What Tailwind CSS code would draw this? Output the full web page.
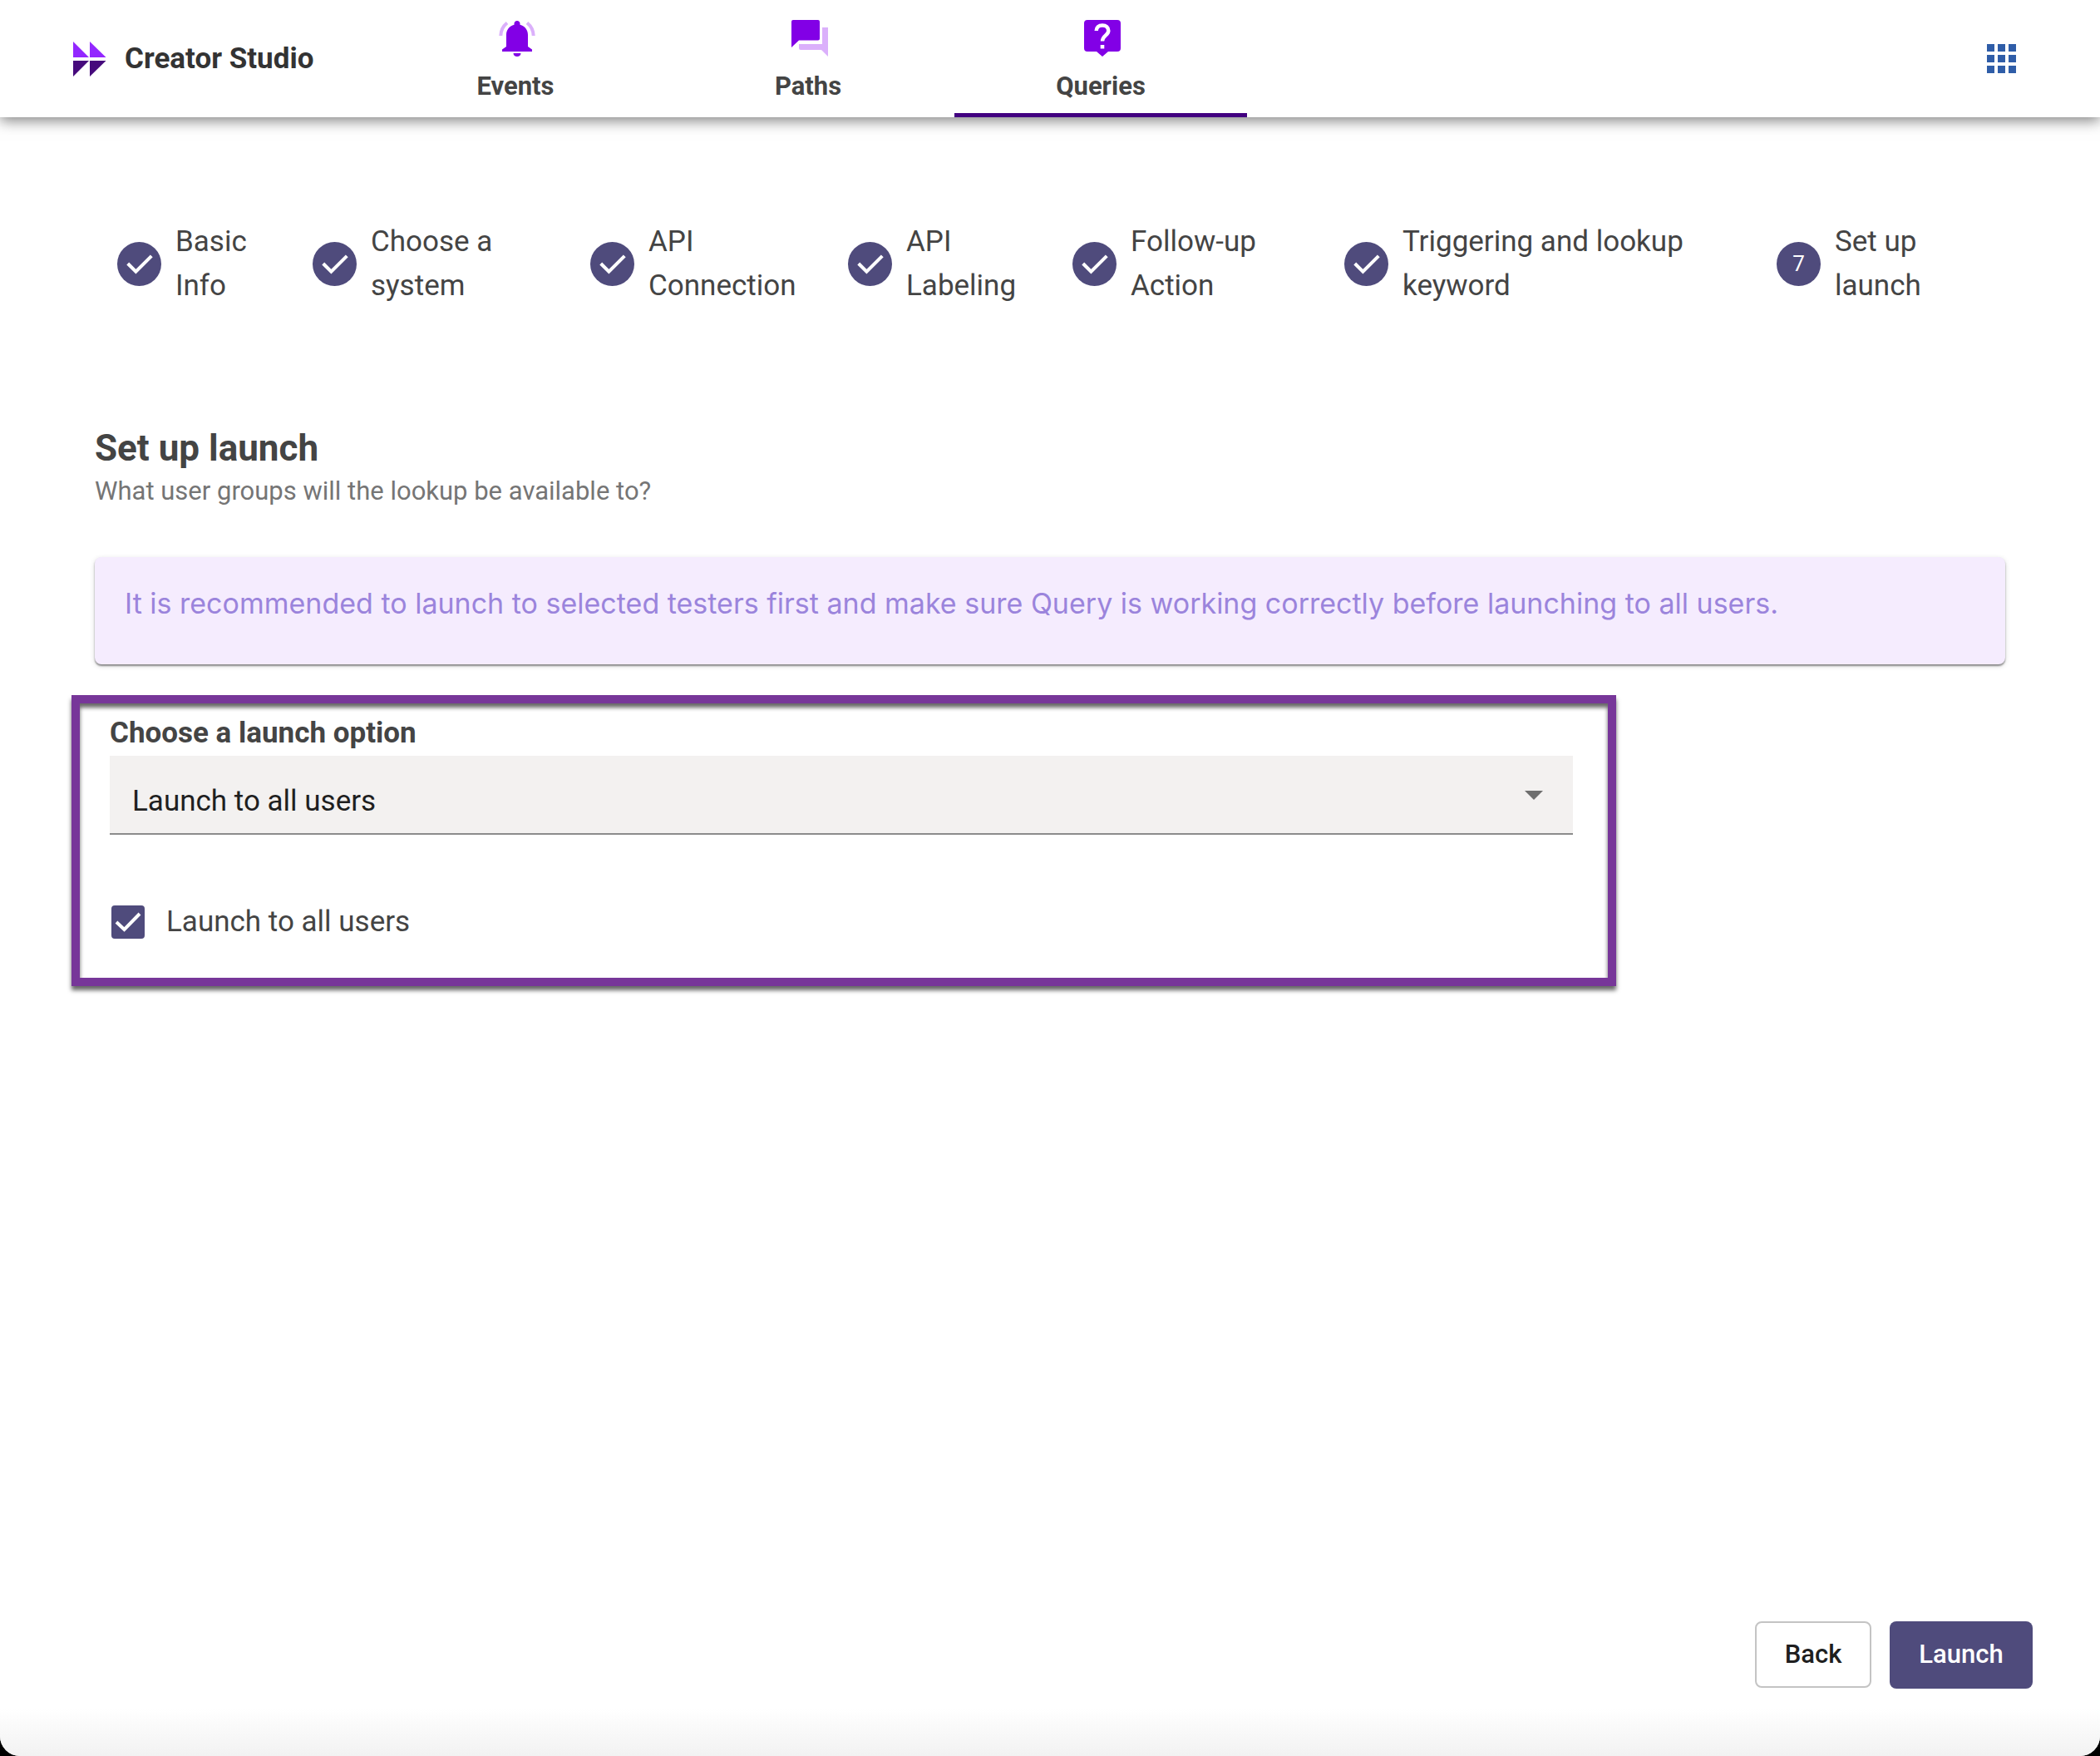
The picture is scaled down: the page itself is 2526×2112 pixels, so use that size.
<!DOCTYPE html>
<html lang="en">
<head>
<meta charset="utf-8">
<meta name="viewport" content="width=device-width, initial-scale=1">
<title>Creator Studio</title>
<script src="https://cdn.jsdelivr.net/npm/@tailwindcss/browser@4"></script>
</head>
<body class="bg-black font-['Roboto',sans-serif] text-[#444444]">
<div class="flex min-h-screen flex-col rounded-b-[24px] bg-white">

  <header class="relative flex h-[141px] items-center bg-white pr-[101px] pl-[88px] shadow-[0_4px_16px_rgba(0,0,0,0.5)]">
    <a href="#" class="flex w-[356px] items-center gap-[22px] text-[35px] leading-[54px] font-bold text-[#333333]">
      <svg class="h-[42px] w-10" viewBox="0 0 40 42" aria-hidden="true">
        <path fill="#9327ff" d="M0 0 19 19H0zM20 0 39.500 19H20z"/>
        <path fill="#460a7c" d="M0 23h19L0 42zM20 23h19.500L20 42z"/>
      </svg>
      Creator Studio
    </a>
    <nav class="flex h-full flex-1 text-[31px] leading-[36px] font-bold">
      <a href="#" class="flex w-[352px] flex-col items-center border-b-[5px] border-transparent pt-[22px]">
        <svg class="ml-1 h-12 w-12" viewBox="0 0 48 48" aria-hidden="true">
          <path fill="#8200e6" d="M24 3c2 0 3.500 1.500 3.500 3.500v1.300C33.500 9.500 37 14 37 20v14l5 3.500V40H6v-2.500L11 34V20c0-6 3.500-10.500 9.500-12.200V6.500C20.500 4.500 22 3 24 3zM19.500 42h9c0 2.500-2 4-4.500 4s-4.500-1.500-4.500-4z"/>
          <path fill="none" stroke="#dbb0fb" stroke-width="4" d="M12 5.500C7 9.500 4.500 14.500 4.300 21M36 5.500c5 4 7.500 9 7.700 15.500"/>
        </svg>
        <span class="mt-4">Events</span>
      </a>
      <a href="#" class="flex w-[352px] flex-col items-center border-b-[5px] border-transparent pt-[22px]">
        <svg class="ml-1 h-12 w-12" viewBox="0 0 48 48" aria-hidden="true">
          <path fill="#8200e6" d="M4 2h30a2 2 0 0 1 2 2v20.500a2 2 0 0 1-2 2H11L2 35V4a2 2 0 0 1 2-2z"/>
          <path fill="#dbb0fb" d="M39 11h7v35l-8-8H13a2 2 0 0 1-2-2v-5h28z"/>
        </svg>
        <span class="mt-4">Paths</span>
      </a>
      <a href="#" aria-current="page" class="flex w-[352px] flex-col items-center border-b-[5px] border-[#420080] pt-[22px]">
        <svg class="ml-1 h-12 w-12" viewBox="0 0 48 48" aria-hidden="true">
          <path fill="#8200e6" d="M6 2h36a4 4 0 0 1 4 4v30a4 4 0 0 1-4 4H31l-7 6-7-6H6a4 4 0 0 1-4-4V6a4 4 0 0 1 4-4z"/>
          <path fill="none" stroke="#fff" stroke-width="4.500" d="M16.700 15c0-4 3-6.500 7.300-6.500s7.300 2.500 7.300 6.500c0 5.500-7.300 6-7.300 12.500"/>
          <path fill="#fff" d="M21.700 32h4.600v4.500h-4.600z"/>
        </svg>
        <span class="mt-4">Queries</span>
      </a>
    </nav>
    <button type="button" aria-label="Apps" class="grid grid-cols-3 gap-1">
      <span class="size-[9px] bg-[#2f5da8]"></span><span class="size-[9px] bg-[#2f5da8]"></span><span class="size-[9px] bg-[#2f5da8]"></span>
      <span class="size-[9px] bg-[#2f5da8]"></span><span class="size-[9px] bg-[#2f5da8]"></span><span class="size-[9px] bg-[#2f5da8]"></span>
      <span class="size-[9px] bg-[#2f5da8]"></span><span class="size-[9px] bg-[#2f5da8]"></span><span class="size-[9px] bg-[#2f5da8]"></span>
    </button>
  </header>

  <svg class="hidden" aria-hidden="true">
    <symbol id="check" viewBox="0 0 52 52"><path fill="none" stroke="#fff" stroke-width="4" d="M12.500 25.500 22 35 40.500 16.500"/></symbol>
  </svg>

  <main class="flex flex-1 flex-col px-[114px] pt-[123px]">
    <ol class="grid grid-cols-[235fr_334fr_310fr_270fr_327fr_520fr_275fr] pl-[27px] text-[35px] leading-[53px]">
      <li class="flex items-center gap-[17px]"><span class="size-[53px] shrink-0 rounded-full bg-[#4f4b7c]"><svg class="size-full"><use href="#check"/></svg></span><span>Basic<br>Info</span></li>
      <li class="flex items-center gap-[17px]"><span class="size-[53px] shrink-0 rounded-full bg-[#4f4b7c]"><svg class="size-full"><use href="#check"/></svg></span><span>Choose a<br>system</span></li>
      <li class="flex items-center gap-[17px]"><span class="size-[53px] shrink-0 rounded-full bg-[#4f4b7c]"><svg class="size-full"><use href="#check"/></svg></span><span>API<br>Connection</span></li>
      <li class="flex items-center gap-[17px]"><span class="size-[53px] shrink-0 rounded-full bg-[#4f4b7c]"><svg class="size-full"><use href="#check"/></svg></span><span>API<br>Labeling</span></li>
      <li class="flex items-center gap-[17px]"><span class="size-[53px] shrink-0 rounded-full bg-[#4f4b7c]"><svg class="size-full"><use href="#check"/></svg></span><span>Follow-up<br>Action</span></li>
      <li class="flex items-center gap-[17px]"><span class="size-[53px] shrink-0 rounded-full bg-[#4f4b7c]"><svg class="size-full"><use href="#check"/></svg></span><span>Triggering and lookup<br>keyword</span></li>
      <li class="flex items-center gap-[17px]" aria-current="step"><span class="size-[53px] shrink-0 rounded-full bg-[#4f4b7c] text-center text-[26px] text-white">7</span><span>Set up<br>launch</span></li>
    </ol>

    <h1 class="mt-[137px] text-[44px] leading-[64px] font-bold">Set up launch</h1>
    <p class="text-[31px] leading-[40px] text-[#757575]">What user groups will the lookup be available to?</p>

    <p class="mt-[59px] min-h-[129px] rounded-lg bg-[#f5ecfe] px-9 pt-8 font-['Inter',sans-serif] text-[34px] leading-[48px] text-[#9b84dc] shadow-[0_2px_2px_rgba(0,0,0,0.4),0_2px_6px_rgba(0,0,0,0.15)]">It is recommended to launch to selected testers first and make sure Query is working correctly before launching to all users.</p>

    <section class="-ml-7 mt-[37px] w-full max-w-[1858px] border-[10px] border-[#773699] pt-3 pr-[42px] pb-[46px] pl-9 shadow-[0_5px_5px_rgba(0,0,0,0.6),inset_0_5px_5px_rgba(0,0,0,0.6)]">
      <label for="option" class="block pb-1 text-[35px] leading-[47px] font-bold">Choose a launch option</label>
      <div class="grid items-center">
        <select id="option" class="col-start-1 row-start-1 h-[95px] w-full appearance-none border-b-2 border-[#8c8c8c] bg-[#f3f1f0] px-[27px] pt-[17px] text-[35px] text-[#1f1f1f]">
          <option>Launch to all users</option>
          <option>Launch to selected testers</option>
        </select>
        <svg class="pointer-events-none col-start-1 row-start-1 mr-9 h-[11px] w-[22px] justify-self-end" viewBox="0 0 22 11" aria-hidden="true"><path fill="#6e6e6e" d="M0 0h22L11 11z"/></svg>
      </div>
      <div class="mt-[84px] flex items-center gap-[26px] pl-[2px] text-[35px] leading-[42px]">
        <span class="grid size-10">
          <input id="all" type="checkbox" checked class="col-start-1 row-start-1 size-10 appearance-none rounded border-2 border-[#4f4b7c] checked:bg-[#4f4b7c]">
          <svg class="pointer-events-none col-start-1 row-start-1 size-10" viewBox="0 0 40 40" aria-hidden="true"><path fill="none" stroke="#fff" stroke-width="4" d="M6 20 15.500 29 34 10"/></svg>
        </span>
        <label for="all">Launch to all users</label>
      </div>
    </section>
  </main>

  <footer class="flex items-start justify-end gap-[22px] rounded-b-[24px] bg-linear-to-b from-white from-65% to-[#f2f2f2] pr-[81px] pb-[81px] text-[31px] font-medium">
    <button type="button" class="h-20 w-[140px] rounded-lg border-2 border-[#c4c4c4] bg-white text-[#1f1f1f]">Back</button>
    <button type="button" class="h-[81px] w-[172px] rounded-lg bg-[#4f4b7c] text-white">Launch</button>
  </footer>
</div>
</body>
</html>
